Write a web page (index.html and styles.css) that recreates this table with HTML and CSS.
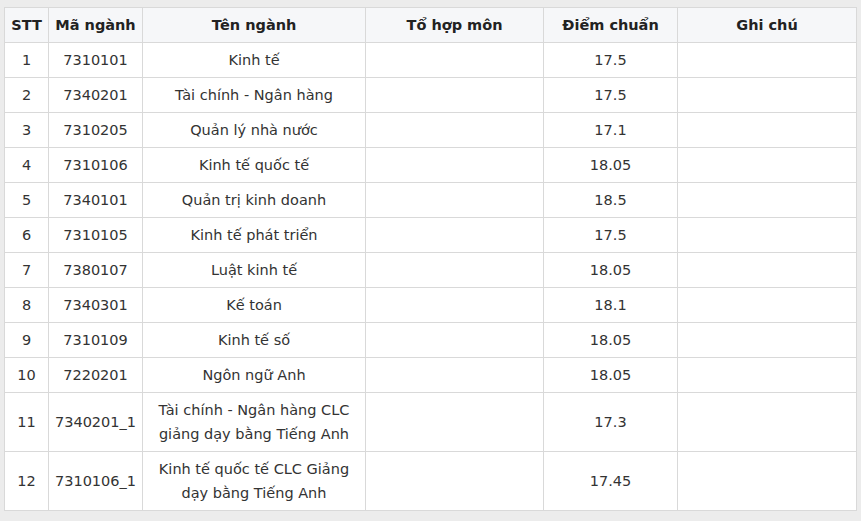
FILE: index.html
```html
<!DOCTYPE html>
<html lang="vi">
<head>
<meta charset="utf-8">
<link rel="stylesheet" href="styles.css">
</head>
<body>
<div class="wrap">
<table class="score-table">
<colgroup>
<col class="c-stt"><col class="c-ma"><col class="c-ten"><col class="c-tohop"><col class="c-diem"><col class="c-ghichu">
</colgroup>
<thead>
<tr><th>STT</th><th>Mã ngành</th><th>Tên ngành</th><th>Tổ hợp môn</th><th>Điểm chuẩn</th><th>Ghi chú</th></tr>
</thead>
<tbody>
<tr><td>1</td><td>7310101</td><td>Kinh tế</td><td></td><td>17.5</td><td></td></tr>
<tr><td>2</td><td>7340201</td><td>Tài chính - Ngân hàng</td><td></td><td>17.5</td><td></td></tr>
<tr><td>3</td><td>7310205</td><td>Quản lý nhà nước</td><td></td><td>17.1</td><td></td></tr>
<tr><td>4</td><td>7310106</td><td>Kinh tế quốc tế</td><td></td><td>18.05</td><td></td></tr>
<tr><td>5</td><td>7340101</td><td>Quản trị kinh doanh</td><td></td><td>18.5</td><td></td></tr>
<tr><td>6</td><td>7310105</td><td>Kinh tế phát triển</td><td></td><td>17.5</td><td></td></tr>
<tr><td>7</td><td>7380107</td><td>Luật kinh tế</td><td></td><td>18.05</td><td></td></tr>
<tr><td>8</td><td>7340301</td><td>Kế toán</td><td></td><td>18.1</td><td></td></tr>
<tr><td>9</td><td>7310109</td><td>Kinh tế số</td><td></td><td>18.05</td><td></td></tr>
<tr><td>10</td><td>7220201</td><td>Ngôn ngữ Anh</td><td></td><td>18.05</td><td></td></tr>
<tr><td>11</td><td>7340201_1</td><td>Tài chính - Ngân hàng CLC giảng dạy bằng Tiếng Anh</td><td></td><td>17.3</td><td></td></tr>
<tr><td>12</td><td>7310106_1</td><td>Kinh tế quốc tế CLC Giảng dạy bằng Tiếng Anh</td><td></td><td>17.45</td><td></td></tr>
</tbody>
</table>
</div>
</body>
</html>
```
FILE: styles.css
```css
html, body {
  margin: 0;
  padding: 0;
  background: #ececec;
}
.wrap {
  padding: 7px 5px 12px 4px;
}
.score-table {
  border-collapse: collapse;
  table-layout: fixed;
  width: 852px;
  background: #ffffff;
  font-family: "DejaVu Sans", Verdana, sans-serif;
  font-size: 14.5px;
  color: #333333;
}
.c-stt { width: 44px; }
.c-ma { width: 94px; }
.c-ten { width: 223px; }
.c-tohop { width: 178px; }
.c-diem { width: 134px; }
.c-ghichu { width: 179px; }
.score-table th,
.score-table td {
  border: 1px solid #d9d9d9;
  padding: 5px 8px;
  line-height: 24px;
  text-align: center;
  vertical-align: middle;
}
.score-table th:nth-child(1),
.score-table td:nth-child(1),
.score-table th:nth-child(2),
.score-table td:nth-child(2) {
  padding: 5px 1px;
  white-space: nowrap;
}
.score-table th {
  background: #f6f7f9;
  font-weight: bold;
  color: #222222;
}
```
